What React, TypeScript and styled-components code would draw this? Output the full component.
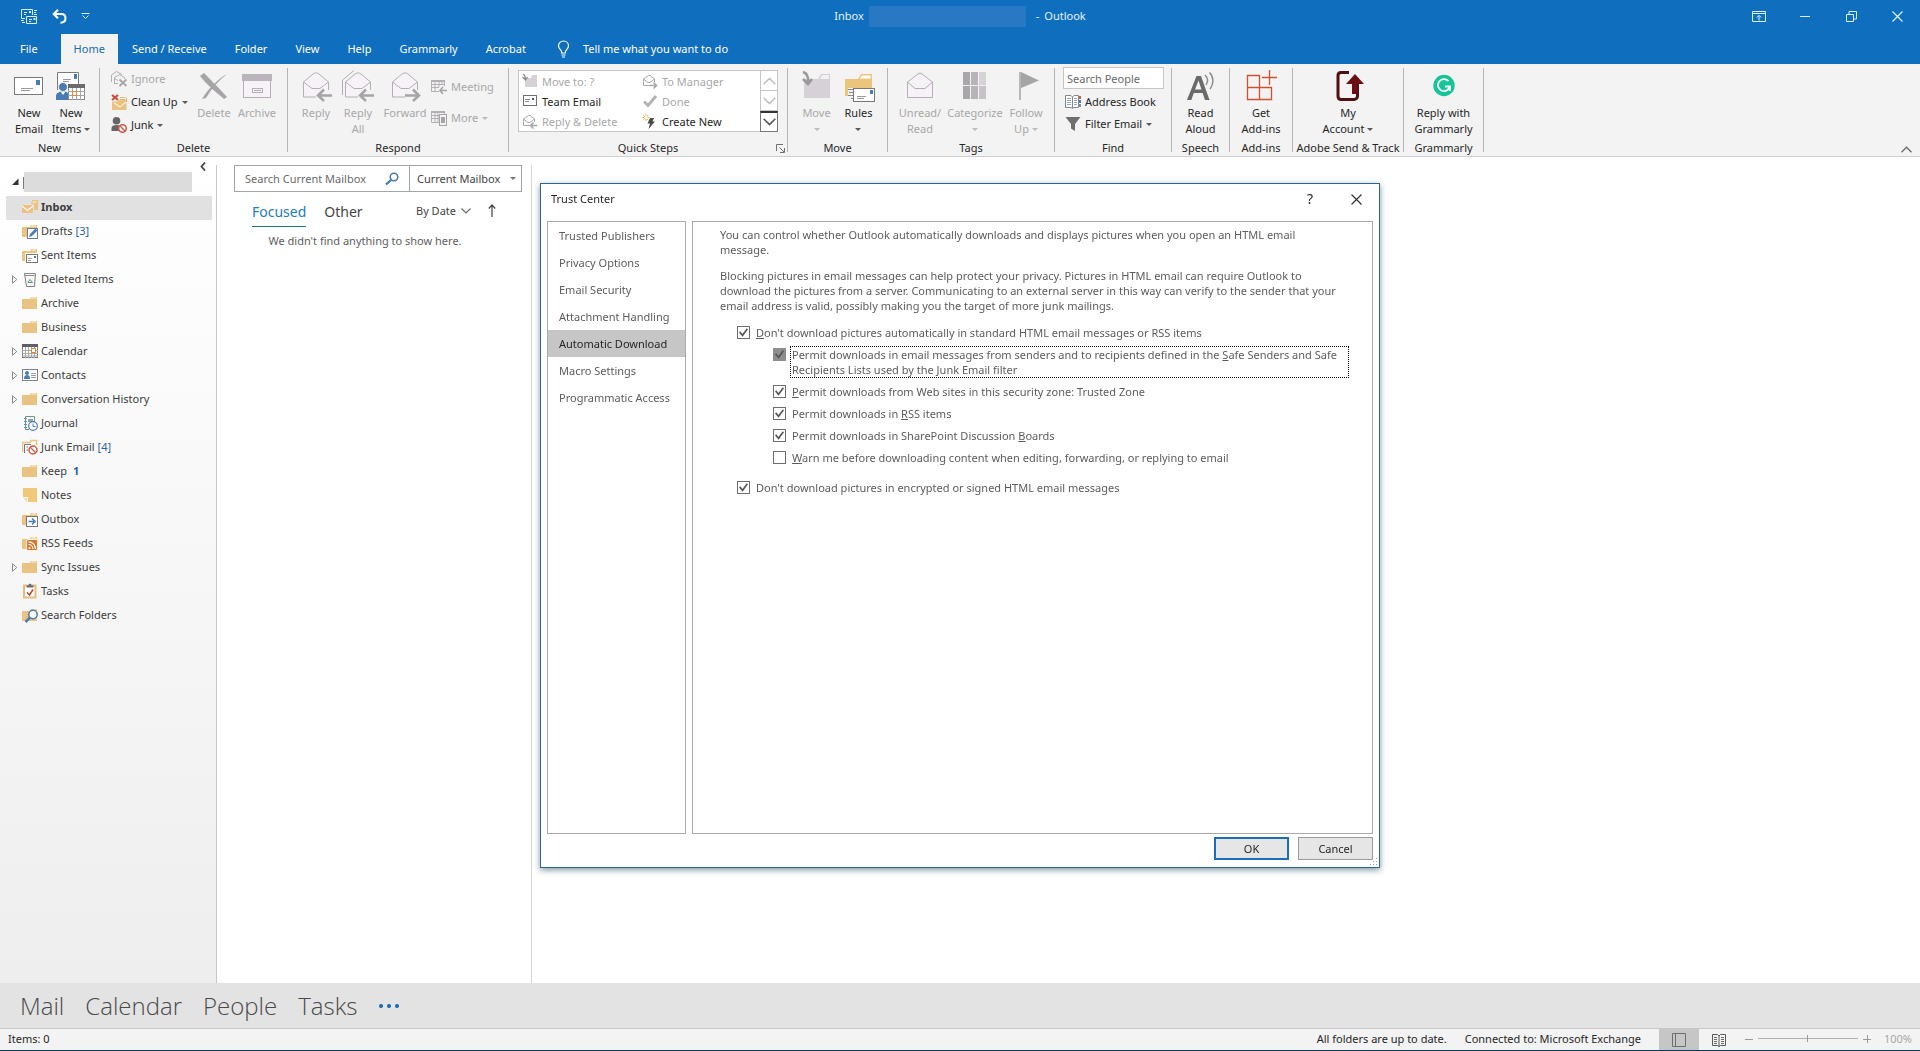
import React, { ReactNode } from "react";
import styled, { createGlobalStyle, css } from "styled-components";

const GlobalStyle = createGlobalStyle`
  *, *::before, *::after { box-sizing: border-box; }
  body { margin: 0; background: #fff; overflow: hidden; }
  body, button, input, select {
    font-family: "Noto Sans", "Open Sans", sans-serif;
    font-size: 11px;
    line-height: 16px;
    color: #262626;
  }
  button { border: 0; padding: 0; background: none; white-space: nowrap; }
  ul { list-style: none; margin: 0; padding: 0; }
  p, h1, h2 { margin: 0; font-size: 11px; font-weight: 400; }
  svg { display: block; flex: none; }
`;

const FADE = "#b3afb4";
const FADE_FILL = "#f6f2f7";
const TAN = "#eac282";
const BLUE = "#4a7cb4";
const GREY = "#6b6b6b";

/* ---------- icons ---------- */

type ArtProps = { w?: number; h?: number; children: ReactNode };
const Art = ({ w = 16, h = w, children }: ArtProps) => (
  <svg width={w} height={h} viewBox={`0 0 ${w} ${h}`} fill="none" aria-hidden="true">
    {children}
  </svg>
);

const SendReceiveIcon = () => (
  <Art w={17}>
    <g stroke="#d9f1ff" strokeWidth="1">
      <path d="M11.500 7V1.500H.5V10.500H4M5.500 8.500H15.500V15.500H5.500Z" />
      <path d="M3 4.500H6M3 6.500H5M8 11.500H11M8 13.500H10M13 2.500H16M13 4.500H15M13 6.500H16M0 12.500H3M1 14.500H4" />
    </g>
    <path d="M8 3H10V5H8ZM12.500 10H14.500V12H12.500Z" fill="#d9f1ff" />
  </Art>
);
const UndoIcon = () => (
  <Art w={15}>
    <path d="M2 5H9C12 5 13.500 7 13.500 9.200C13.500 11.500 12 13.500 8.500 13.800" stroke="#fff" strokeWidth="2" />
    <path d="M6 .8L1.800 5L6 9.200" stroke="#fff" strokeWidth="2.200" />
  </Art>
);
const QatMoreIcon = () => (
  <Art w={9} h={8}>
    <path d="M.5 1.500H8.500M1.500 3.500L4.500 6.500L7.500 3.500" stroke="#d9f1ff" />
  </Art>
);
const RibbonOptionsIcon = () => (
  <Art w={14} h={12}>
    <path d="M.5 1.500H13.500V11.500H.5ZM.5 3.500H13.500M7 10.500V5.500M4.800 7.500L7 5.300L9.200 7.500" stroke="#d9f1ff" />
  </Art>
);
const MinimizeIcon = () => (
  <Art w={10}><path d="M0 5.500H10" stroke="#d9f1ff" /></Art>
);
const RestoreIcon = () => (
  <Art w={11}><path d="M.5 3.500H7.500V10.500H.5ZM3 3.500V.5H10.500V8H8" stroke="#d9f1ff" /></Art>
);
const CloseIcon = ({ color = "#d9f1ff" }: { color?: string }) => (
  <Art w={11}><path d="M.5 .5L10.500 10.500M10.500 .5L.5 10.500" stroke={color} strokeWidth="1.200" /></Art>
);
const BulbIcon = () => (
  <Art w={13} h={18}>
    <path d="M4.500 13V11.500C4.500 9.800 1.500 9 1.500 5.800C1.500 3 3.700 1 6.500 1S11.500 3 11.500 5.800C11.500 9 8.500 9.800 8.500 11.500V13ZM4.500 15H8.500M5 17H8" stroke="#fff" strokeWidth="1.200" />
  </Art>
);

const Mail = ({ x, y, w, h }: { x: number; y: number; w: number; h: number }) => (
  <>
    <rect x={x + 0.5} y={y + 0.5} width={w - 1} height={h - 1} fill="#fff" stroke="#7a7a7a" />
    <rect x={x + w - 7} y={y + 3} width="4" height="5" fill={BLUE} />
    <path d={`M${x + 7} ${y + h - 6.5}H${x + w - 10}M${x + 7} ${y + h - 4.5}H${x + w - 13}`} stroke="#9a9a9a" />
  </>
);
const NewEmailIcon = () => (
  <Art w={32}><Mail x={1} y={7} w={29} h={18} /></Art>
);
const NewItemsIcon = () => (
  <Art w={32}>
    <path d="M2.500 20V2.500H23.500V15" fill="#fff" stroke="#7a7a7a" />
    <rect x="19" y="4" width="3" height="5" fill={BLUE} />
    <path d="M8 9.500H16M8 11.500H14" stroke="#9a9a9a" />
    <circle cx="8" cy="17" r="4.500" fill={BLUE} stroke="#f3f3f3" />
    <path d="M1 30V26C1 23 4 21.500 8 21.500S14.500 23 14.500 26V30Z" fill={BLUE} />
    <path d="M5.500 21.500L8 25L10.500 21.500Z" fill="#fff" />
    <rect x="13.500" y="15.500" width="16" height="14" fill="#fff" stroke="#8a8a8a" />
    <rect x="13" y="14" width="17" height="4" fill="#6b6b6b" />
    <path d="M17.500 18V30M21.500 18V30M25.500 18V30M13 21.500H30M13 25.500H30" stroke="#a5a5a5" />
    <rect x="17.500" y="21.500" width="4" height="4" stroke="#e08a3c" fill="#fff" />
  </Art>
);
const IgnoreIcon = () => (
  <Art w={16}>
    <path d="M.5 11V4L5.500 .5L11 3.500M3.500 13V6.500L8.500 3.500L13.500 6.500V8M3.500 12.500H7M3.500 7.500L7 9.500" stroke={FADE} />
    <path d="M8.500 8.500L15.500 15M15.500 8.500L8.500 15" stroke="#a8a4a8" strokeWidth="1.800" />
  </Art>
);
const CleanUpIcon = () => (
  <Art w={16}>
    <path d="M1 1L7 6M7 1L1 6" stroke="#cf4a33" strokeWidth="2" />
    <path d="M9 3.500H14.500M9 5.500H14.500M15.500 4V8" stroke="#e0b878" />
    <path d="M1 7.500H6V6H15.500V16H1Z" fill={TAN} />
    <path d="M3 9L9 13L15 8" stroke="#fff" />
  </Art>
);
const JunkIcon = () => (
  <Art w={16}>
    <circle cx="5.500" cy="3.800" r="3.800" fill="#666" />
    <path d="M.5 14V11C.5 9 2.500 8 5.500 8S9 9 9 10V14Z" fill="#666" />
    <circle cx="11.500" cy="11.500" r="3.800" fill="#f3f3f3" stroke="#cf5a48" strokeWidth="1.500" />
    <path d="M9 9L14 14" stroke="#cf5a48" strokeWidth="1.300" />
  </Art>
);
const DeleteIcon = () => (
  <Art w={32}>
    <path d="M2 6L6 3C11 8 20 17 29 27L26 29C19 23 8 14 2 6Z" fill="#a7a4a7" />
    <path d="M29 4C20 9 10 19 4 29L8 28C13 19 20 11 29 4Z" fill="#a7a4a7" />
  </Art>
);
const ArchiveIcon = () => (
  <Art w={32}>
    <rect x="2.500" y="9" width="27" height="18.500" fill={FADE_FILL} stroke={FADE} />
    <rect x="1" y="4" width="30" height="7" fill="#b9b5ba" />
    <rect x="11.500" y="18.500" width="10" height="4" stroke={FADE} />
    <path d="M13 20.500H20" stroke={FADE} />
  </Art>
);
const Envelope = () => (
  <>
    <path d="M3.500 27V12L15.500 3L28.500 12V27Z" fill={FADE_FILL} />
    <path d="M18 27H3.500V12L13 4C15.500 2.500 17 2.500 19 4L28.500 12V20M3.500 12L12 18.500H20L28.500 12" stroke={FADE} />
  </>
);
const ReplyIcon = () => (
  <Art w={32}>
    <Envelope />
    <path d="M16 21H31V31H16Z" fill="#f3f3f3" />
    <path d="M18 25.500H32M24 19.500L18 25.500L24 31" stroke="#a7a4a7" strokeWidth="2.500" />
  </Art>
);
const ReplyAllIcon = () => (
  <Art w={32}>
    <path d="M.5 25V10L12 .5" stroke={FADE} />
    <Envelope />
    <path d="M16 21H31V31H16Z" fill="#f3f3f3" />
    <path d="M18 25.500H32M24 19.500L18 25.500L24 31" stroke="#a7a4a7" strokeWidth="2.500" />
  </Art>
);
const ForwardIcon = () => (
  <Art w={32}>
    <Envelope />
    <path d="M16 21H31V31H16Z" fill="#f3f3f3" />
    <path d="M16 25.500H30M24 19.500L30 25.500L24 31" stroke="#a7a4a7" strokeWidth="2.500" />
  </Art>
);
const MeetingIcon = () => (
  <Art w={16}>
    <path d="M.5 1.500H13.500V7M.5 1.500V12.500H8M4 3V12M8 3V8M1 5.500H13M1 8.500H8M11 3V6" stroke={FADE} />
    <path d="M0 2H14" stroke={FADE} strokeWidth="2" />
    <path d="M9 11.500H16M12 8L9 11.500L12 15" stroke="#a7a4a7" strokeWidth="1.600" />
  </Art>
);
const MoreRespondIcon = () => (
  <Art w={16}>
    <path d="M.5 1.500H13.500V4M.5 1.500V12.500H8M4 3V12M1 5.500H8M1 8.500H8M7 3V12" stroke={FADE} />
    <path d="M0 2H14" stroke={FADE} strokeWidth="2" />
    <rect x="8.500" y="4.500" width="7" height="11" fill="#f3f3f3" stroke="#a7a4a7" />
    <rect x="10" y="7" width="4" height="6" fill="#a7a4a7" />
  </Art>
);
const MoveToIcon = () => (
  <Art w={16}>
    <path d="M3 4H9L10 1H15V13H3Z" fill="#d6d1d7" />
    <path d="M1 0C3 1 3.500 3 3.500 5M.5 3L3.500 6L5.500 3" stroke="#8c8a8c" strokeWidth="1.300" />
  </Art>
);
const TeamEmailIcon = () => (
  <Art w={16}>
    <rect x="1.500" y="1.500" width="13" height="10" fill="#fff" stroke="#6e6e6e" />
    <path d="M3 5.500H8M3 7.500H7" stroke="#8a8a8a" />
    <path d="M10 4H12V6H10Z" fill="#555" />
  </Art>
);
const SmallReplyIcon = ({ forward }: { forward?: boolean }) => (
  <Art w={16}>
    <path d="M8 11.500H1.500V5L6.500 1.500H8L12.500 5V8M1.500 5L6 8.500H8L12.500 5" stroke="#aaa6ab" />
    <path d={forward ? "M8 11.500H14.500M11.500 8.500L14.500 11.500L11.500 14.500" : "M8.500 11.500H15.500M11.500 8.500L8.500 11.500L11.500 14.500"} stroke="#a7a4a7" strokeWidth="1.500" />
  </Art>
);
const DoneIcon = () => (
  <Art w={16}><path d="M2 7.500L6 11.500L14 2" stroke="#b3b1b3" strokeWidth="2.800" /></Art>
);
const CreateNewIcon = () => (
  <Art w={16}>
    <path d="M4 0V7M0 3.500H7.500M1.200 1.200L6.300 6.200M6.300 1.200L1.200 6.200" stroke="#e3b65f" />
    <circle cx="4" cy="3.500" r="1.500" fill="#fff" />
    <path d="M8 4H12L10.500 7.500H13L6.500 15L8 9.500H5.500Z" fill="#4a4a4a" />
  </Art>
);
const LauncherIcon = () => (
  <Art w={9}>
    <path d="M.5 7V.5H7M3.500 3.500L8 8M8.500 4V8.500H4" stroke="#6e6e6e" />
  </Art>
);
const MoveIcon = () => (
  <Art w={32}>
    <path d="M3 9H17L20 4H29V28H3Z" fill="#d6d1d7" />
    <path d="M19 9L21 5H28V9Z" fill="#f3f0f4" />
    <path d="M2 2C6 3 7.500 6 7 12M2 9L7 14L11 9" stroke="#9a989a" strokeWidth="2.600" />
  </Art>
);
const RulesIcon = () => (
  <Art w={32}>
    <path d="M2 9H15L18 4H29V26H2Z" fill="#ecc57c" />
    <path d="M17 8.500L19 5.500H27.500V8.500Z" fill="#fff" />
    <path d="M5 18H11V30H5Z" fill="#f3f3f3" />
    <path d="M5 19.500H10M6 22.500H10M5 25.500H10M8 28.500H10" stroke="#8a8a8a" />
    <rect x="10.500" y="18.500" width="21" height="13" fill="#fff" stroke="#777" />
    <rect x="27" y="20" width="3" height="4" fill={BLUE} />
    <path d="M14 26.500H23M14 28.500H21" stroke="#9a9a9a" />
  </Art>
);
const UnreadIcon = () => (
  <Art w={32}>
    <path d="M3.500 27.500V12L14 4C15.500 3 16.500 3 18 4L28.500 12V27.500ZM3.500 12L11 18.500H21L28.500 12" fill={FADE_FILL} stroke={FADE} />
  </Art>
);
const CategorizeIcon = () => (
  <Art w={32}>
    <path d="M4 2H11V15H4ZM4 16H11V29H4Z" fill="#aaa7ab" />
    <path d="M12 2H19V15H12ZM12 16H19V29H12Z" fill="#b7b3b8" />
    <path d="M20 2H27V15H20Z" fill="#d6d2d7" />
    <path d="M20 16H27V29H20Z" fill="#c6c2c7" />
  </Art>
);
const FlagIcon = () => (
  <Art w={32}>
    <path d="M9 2H11V30H9Z" fill="#b9b5ba" />
    <path d="M11 2L29 10.500L11 18Z" fill="#a7a4a7" />
  </Art>
);
const AddressBookIcon = () => (
  <Art w={16}>
    <path d="M.5 1.500H6L7.500 3L9 1.500H13.500V13.500H9L7.500 14.500L6 13.500H.5ZM7.500 3V14" fill="#fff" stroke="#7d8a96" />
    <path d="M2 4.500H6M2 6.500H6M2 8.500H6M2 10.500H6M9 4.500H12M9 6.500H12M9 8.500H12M9 10.500H12" stroke="#9aa4ad" />
    <path d="M14 2H16V5H14Z" fill="#cf5a48" /><path d="M14 6H16V9H14Z" fill={BLUE} /><path d="M14 10H16V13H14Z" fill="#8a8a8a" />
  </Art>
);
const FilterIcon = () => (
  <Art w={16}><path d="M.5 1H15.500L10 8V15L6 12.500V8Z" fill="#6e6e6e" /></Art>
);
const ReadAloudIcon = () => (
  <Art w={32}>
    <path d="M2 30L11.500 6H16L24.500 30H20L17.600 23H8.800L6.300 30ZM10 19.500H16.500L13.500 10.500Z" fill="#6a6a6a" fillRule="evenodd" />
    <path d="M20 5C23 8 23 12 21 15M24.500 2.500C29 7 29 14 25 19" stroke="#8a8a8a" strokeWidth="1.400" />
  </Art>
);
const AddInsIcon = () => (
  <Art w={32}>
    <path d="M2.500 5.500H14.500V29.500H2.500ZM2.500 17.500H26.500V29.500H14.500M24.500 0V15M17 7.500H32" stroke="#cf5232" strokeWidth="1.300" />
  </Art>
);
const AccountIcon = () => (
  <Art w={32}>
    <path d="M17 2.500H9C7 2.500 6 3.500 6 5.500V26C6 28 7 29.500 9 29.500H22C24 29.500 25.500 28 25.500 26V12" stroke="#4d1013" strokeWidth="3" />
    <path d="M23 4L32 14H14Z" fill="#6b0f14" />
    <path d="M20 12H26V24H20Z" fill="#6b0f14" />
  </Art>
);
const GrammarlyIcon = () => (
  <Art w={32}>
    <circle cx="16" cy="15.500" r="10.700" fill="#17c497" />
    <path d="M20.500 11.200A6 6 0 1 0 21.800 16.500H17M22 16V21" stroke="#fff" strokeWidth="1.800" />
  </Art>
);

/* folder icons */
const FolderShape = () => (
  <>
    <path d="M0 4H8L9 2H15V14H0Z" fill={TAN} />
    <path d="M9 3.500L9.800 2.500H14V3.500Z" fill="#fff8ea" />
  </>
);
const FolderIcon = () => <Art><FolderShape /></Art>;
const InboxIcon = () => (
  <Art>
    <path d="M4 5H9L10 1H16V11H4Z" fill={TAN} />
    <path d="M10.500 2.500H14.500V3.500H10.500Z" fill="#fff" />
    <rect x="-.5" y="5.500" width="12" height="9" fill="#ecc080" stroke="#e2e2e2" />
    <path d="M0 7L5.500 11.500L11 7" stroke="#fff" strokeWidth="1.200" />
  </Art>
);
const DraftsIcon = () => (
  <Art>
    <FolderShape />
    <rect x="5.500" y="5.500" width="10" height="10" fill="#fff" stroke="#6d7f96" />
    <path d="M7 14L8 11L13.500 5.500L15.500 7.500L10 13Z" fill={BLUE} />
  </Art>
);
const SentIcon = () => (
  <Art>
    <FolderShape />
    <path d="M3 6H16V16H3Z" fill="#fff" />
    <rect x="4.500" y="7.500" width="11" height="8" fill="#fff" stroke="#777" />
    <path d="M6 11.500H10M6 13.500H9" stroke="#999" /><path d="M12 9H14V11H12Z" fill="#5a7690" />
  </Art>
);
const TrashIcon = () => (
  <Art>
    <path d="M2.500 2.500H13.500L12.500 15.500H4.500Z" fill="#f7f7f7" stroke="#7d7d7d" />
    <path d="M2 2.500H13M3 4.500H12.500" stroke="#8d8d8d" />
    <path d="M6 11.500L8 8.500L10.500 11.500Z" stroke="#5f8f8a" />
  </Art>
);
const CalendarIcon = () => (
  <Art>
    <rect x=".5" y="2.500" width="15" height="12" fill="#fff" stroke="#7a7a7a" />
    <path d="M0 1H16V4H0Z" fill="#5f5f68" />
    <path d="M3.500 4V15M6.500 4V15M9.500 4V15M12.500 4V15M0 7.500H16M0 10.500H16M0 13H16" stroke="#aaa" />
    <rect x="9.500" y="5.500" width="4" height="4" fill="#fff" stroke="#dd8a3a" />
  </Art>
);
const ContactsIcon = () => (
  <Art>
    <rect x=".5" y="2.500" width="15" height="11" fill="#fff" stroke="#7a8490" />
    <circle cx="5" cy="6" r="2" fill={BLUE} /><path d="M2 12C2 9 3 8 5 8S8 9 8 12Z" fill={BLUE} />
    <path d="M9 6.500H14M9 8.500H14M9 10.500H14" stroke="#999" />
  </Art>
);
const JournalIcon = () => (
  <Art>
    <path d="M3.500 1.500H12.500V7M3.500 1.500V14.500H7" stroke="#6c9494" />
    <path d="M2 3.500H5M2 6.500H5M2 9.500H5M2 12.500H5" stroke="#6c9494" />
    <path d="M6 4H11V7H6Z" fill="#8aa9a9" />
    <circle cx="11" cy="11" r="4.300" fill="#fff" stroke={BLUE} strokeWidth="1.200" />
    <path d="M11 8.500V11.500H13.500" stroke={BLUE} />
  </Art>
);
const JunkFolderIcon = () => (
  <Art>
    <path d="M.5 13V3.500H8L9 1.500H14.500V6" stroke={TAN} strokeWidth="1.500" />
    <path d="M2.500 14V5.500H9M4.500 8H6M4.500 11H6" stroke="#777" />
    <circle cx="11" cy="11" r="4" fill="#fff" stroke="#cf5a48" strokeWidth="1.500" />
    <path d="M8.300 8.300L13.700 13.700" stroke="#cf5a48" strokeWidth="1.300" />
  </Art>
);
const NotesIcon = () => (
  <Art>
    <path d="M1 1H15V15H6V10H1Z" fill="#efc878" /><path d="M1 11H5V15Z" fill="#f6dcaa" />
  </Art>
);
const OutboxIcon = () => (
  <Art>
    <FolderShape />
    <rect x="4.500" y="5.500" width="11" height="10" fill="#fff" stroke="#777" />
    <path d="M6.500 10.500H13M10 7.500L13 10.500L10 13.500" stroke={BLUE} strokeWidth="1.600" />
  </Art>
);
const RssIcon = () => (
  <Art>
    <FolderShape />
    <rect x="4.500" y="4.500" width="11" height="11" rx="1.500" fill="#d9772e" stroke="#fff3e6" />
    <circle cx="7.500" cy="13" r="1.100" fill="#fff" />
    <path d="M6.500 9.500C9 9.500 11 11.500 11 14M6.500 6.800C10.500 6.800 13.500 10 13.500 14" stroke="#fff" strokeWidth="1.200" />
  </Art>
);
const TasksIcon = () => (
  <Art>
    <path d="M2 2.500H13.500V14.500H2Z" fill="#fff" stroke="#e2bd80" strokeWidth="2" />
    <path d="M4.500 4.500V2.500H6.500C6.500 0 9.500 0 9.500 2.500H11.500V4.500Z" fill="#6b6b74" />
    <path d="M5 9.500L7.500 12L11 6.500" stroke="#b8493a" strokeWidth="1.600" />
  </Art>
);
const SearchFolderIcon = () => (
  <Art>
    <FolderShape />
    <circle cx="11" cy="7.500" r="4.200" fill="#fff" stroke={BLUE} strokeWidth="1.500" />
    <path d="M8 10.500L3.500 15" stroke={BLUE} strokeWidth="2.500" />
  </Art>
);
const MagnifierIcon = () => (
  <Art w={14}>
    <circle cx="9" cy="5" r="3.800" stroke="#4378a8" strokeWidth="1.500" />
    <path d="M6.300 7.700L1 12.500" stroke="#4378a8" strokeWidth="2.200" />
  </Art>
);
const Chevron = ({ up, size = 10, color = GREY }: { up?: boolean; size?: number; color?: string }) => (
  <svg width={size} height={Math.round(size * 0.6)} viewBox="0 0 10 6" fill="none" aria-hidden="true">
    <path d={up ? "M.5 5.500L5 1L9.500 5.500" : "M.5 .5L5 5L9.500 .5"} stroke={color} strokeWidth="1.200" />
  </svg>
);
const ArrowUpIcon = () => (
  <Art w={8} h={13}><path d="M4 13V1M.8 4.500L4 1L7.200 4.500" stroke="#444" strokeWidth="1.200" /></Art>
);
const NormalViewIcon = () => (
  <Art w={14}><path d="M.5 .5H13.500V13.500H.5ZM3.500 .5V13.500" stroke="#6e6e6e" /></Art>
);
const ReadingViewIcon = () => (
  <Art w={14}>
    <path d="M7 2V14M.5 1.500H5.500L7 3L8.500 1.500H13.500V12.500H8.500L7 13.500L5.500 12.500H.5Z" stroke="#5a5a5a" />
    <path d="M2 4.500H5M2 6.500H5M2 8.500H5M2 10.500H5M9 4.500H12M9 6.500H12M9 8.500H12M9 10.500H12" stroke="#6a6a6a" />
  </Art>
);

/* ---------- window frame ---------- */

const Window = styled.div`
  display: flex;
  flex-direction: column;
  height: 100vh;
  border-bottom: 1px solid #0b3a63;
`;
const TitleBar = styled.header`
  display: grid;
  grid-template-columns: 1fr auto 1fr;
  align-items: center;
  height: 34px;
  flex: none;
  padding-bottom: 2px;
  background: #106ebe;
  color: #e2f3ff;
`;
const QuickAccess = styled.div`
  display: flex;
  align-items: center;
  gap: 14px;
  padding-left: 21px;
`;
const WindowTitle = styled.h1`
  display: flex;
  align-items: center;
  gap: 5px;
  color: #e2f3ff;
`;
const Redaction = styled.span<{ $w: number }>`
  width: ${(p) => p.$w}px;
  height: 21px;
  margin-right: 5px;
  background: #2878c3;
`;
const Captions = styled.div`
  display: flex;
  justify-self: end;
`;
const CaptionButton = styled.button`
  display: grid;
  place-items: center;
  width: 46px;
  height: 30px;
`;
const TabBar = styled.nav`
  display: flex;
  align-items: stretch;
  height: 30px;
  flex: none;
  background: #106ebe;
`;
const Tab = styled.button<{ $active?: boolean; $file?: boolean }>`
  padding: 0 ${(p) => (p.$file ? "23px 0 20px" : p.$active ? "13px" : "14px")};
  color: #fff;
  ${(p) => p.$active && css`background: #f3f3f3; color: #1a6bb0;`}
`;
const TellMe = styled.button`
  display: flex;
  align-items: center;
  gap: 13px;
  padding-left: 17px;
  color: #fff;
`;

/* ---------- ribbon ---------- */

const Ribbon = styled.section`
  display: flex;
  flex: none;
  height: 93px;
  background: #f3f3f3;
  border-bottom: 1px solid #cfcfcf;
`;
const GroupBox = styled.div<{ $w: number; $top: number }>`
  display: flex;
  flex-direction: column;
  width: ${(p) => p.$w}px;
  padding-top: ${(p) => p.$top}px;
`;
const GroupBody = styled.div<{ $start?: number }>`
  display: flex;
  flex: 1;
  min-height: 0;
  ${(p) => (p.$start === undefined ? "justify-content: center;" : `padding-left: ${p.$start}px;`)}
`;
const GroupLabel = styled.div`
  display: grid;
  grid-template-columns: 1fr auto 1fr;
  align-items: center;
  height: 16px;
  flex: none;
  white-space: nowrap;
  & > span { grid-column: 2; }
`;
const Launcher = styled.button`
  justify-self: end;
  padding-right: 2px;
`;
const Divider = styled.div`
  width: 1px;
  height: 84px;
  margin-top: 4px;
  background: #b5b5b5;
`;
const Big = styled.button<{ $w: number }>`
  display: flex;
  flex-direction: column;
  align-items: center;
  justify-content: flex-start;
  width: ${(p) => p.$w}px;
  &:disabled { color: #a9a7a9; }
`;
const BigText = styled.span`
  display: flex;
  flex-direction: column;
  align-items: center;
  padding-top: 3px;
`;
const BigLine = styled.span`
  display: flex;
  align-items: center;
  height: 16px;
`;
const Caret = styled.i<{ $gap?: number }>`
  border: 3px solid transparent;
  border-top-color: currentColor;
  border-bottom: 0;
  margin-left: ${(p) => p.$gap ?? 3}px;
  opacity: 0.75;
`;
const SmallColumn = styled.div<{ $w: number; $gap: number; $top?: number }>`
  display: flex;
  flex-direction: column;
  gap: ${(p) => p.$gap}px;
  width: ${(p) => p.$w}px;
  padding-top: ${(p) => p.$top ?? 0}px;
`;
const Small = styled.button<{ $inset?: boolean }>`
  display: flex;
  align-items: center;
  gap: 4px;
  height: 18px;
  padding-left: ${(p) => (p.$inset ? 2 : 0)}px;
  &:disabled { color: #a9a7a9; }
`;
const Gallery = styled.div`
  display: flex;
  width: 260px;
  height: 62px;
  background: #fff;
  border: 1px solid #c6c6c6;
`;
const GalleryGrid = styled.div`
  display: grid;
  grid-template-columns: 120px 1fr;
  grid-auto-rows: 20px;
  align-items: end;
  flex: 1;
  padding-left: 3px;
`;
const GalleryScroll = styled.div`
  display: grid;
  grid-template-rows: repeat(3, 1fr);
  width: 17px;
  border-left: 1px solid #c6c6c6;
`;
const ScrollButton = styled.button<{ $more?: boolean }>`
  display: grid;
  place-items: center;
  border-bottom: 1px solid #c6c6c6;
  ${(p) => p.$more && css`border: 1px solid #777; border-top: 2px solid #333; margin: 0 -1px -1px;`}
`;
const PeopleSearch = styled.input`
  width: 101px;
  height: 22px;
  padding: 0 3px;
  border: 1px solid #c6c6c6;
  background: #fff;
  &::placeholder { color: #6a6a6a; opacity: 1; }
`;
const CollapseRibbon = styled.button`
  align-self: flex-end;
  margin-left: auto;
  padding: 0 8px 3px;
`;

type BigProps = { w: number; icon: ReactNode; lines: string[]; caret?: boolean; caretBelow?: boolean; disabled?: boolean };
const BigButton = ({ w, icon, lines, caret, caretBelow, disabled }: BigProps) => (
  <Big $w={w} disabled={disabled}>
    {icon}
    <BigText>
      {lines.map((line, i) => (
        <BigLine key={line}>
          {line}
          {caret && i === lines.length - 1 && <Caret />}
        </BigLine>
      ))}
      {caretBelow && <BigLine><Caret $gap={0} /></BigLine>}
    </BigText>
  </Big>
);

type SmallProps = { icon: ReactNode; label: string; caret?: boolean; disabled?: boolean; inset?: boolean };
const SmallButton = ({ icon, label, caret, disabled, inset }: SmallProps) => (
  <Small disabled={disabled} $inset={inset}>
    {icon}
    {label}
    {caret && <Caret $gap={0} />}
  </Small>
);

type GroupProps = { w: number; label: string; start?: number; top?: number; launcher?: boolean; children: ReactNode };
const Group = ({ w, label, start, top = 6, launcher, children }: GroupProps) => (
  <>
    <GroupBox $w={w} $top={top}>
      <GroupBody $start={start}>{children}</GroupBody>
      <GroupLabel>
        <span>{label}</span>
        {launcher && <Launcher aria-label="Manage quick steps"><LauncherIcon /></Launcher>}
      </GroupLabel>
    </GroupBox>
    <Divider />
  </>
);

/* ---------- main area ---------- */

const Main = styled.main`
  display: flex;
  flex: 1;
  min-height: 0;
`;
const Sidebar = styled.aside`
  width: 216px;
  flex: none;
  padding: 3px 4px 0 6px;
  background: linear-gradient(#fff, #f7f7f7 50%, #eeeeee);
`;
const VerticalRule = styled.div<{ $color: string }>`
  width: 1px;
  margin-top: 8px;
  background: ${(p) => p.$color};
`;
const CollapsePane = styled.button`
  display: block;
  height: 12px;
  margin: 0 6px 0 auto;
`;
const AccountRow = styled.div`
  display: flex;
  align-items: flex-start;
  gap: 4px;
  height: 24px;
  padding-left: 6px;
`;
const AccountMark = styled.span`
  width: 1px;
  height: 12px;
  margin: 5px 0 0 -1px;
  background: #777;
`;
const AccountName = styled.span`
  width: 168px;
  height: 20px;
  margin-left: -4px;
  background: #dcdcdc;
`;
const FolderRow = styled.li<{ $selected?: boolean }>`
  display: grid;
  grid-template-columns: 16px 16px auto 1fr;
  align-items: center;
  height: 24px;
  padding-bottom: 2px;
  color: #3c3c3c;
  background: ${(p) => (p.$selected ? "#e1e1e1" : "transparent")};
  font-weight: ${(p) => (p.$selected ? 700 : 400)};
`;
const FolderName = styled.span`
  padding-left: 3px;
`;
const Count = styled.span<{ $bold?: boolean }>`
  padding-left: ${(p) => (p.$bold ? 6 : 3)}px;
  font-weight: ${(p) => (p.$bold ? 700 : 400)};
  color: #2a63a5;
`;
const Expander = styled.span`
  padding-left: 6px;
`;

const MessageList = styled.section`
  width: 314px;
  flex: none;
  padding: 8px 9px 0 17px;
`;
const SearchRow = styled.div`
  display: grid;
  grid-template-columns: 1fr 24px 112px;
  align-items: center;
  height: 27px;
  border: 1px solid #a0a5aa;
`;
const MailSearch = styled.input`
  width: 100%;
  border: 0;
  padding: 0 0 0 10px;
  outline: 0;
  &::placeholder { color: #6a6a6a; opacity: 1; }
`;
const ScopeBox = styled.label`
  display: flex;
  align-items: center;
  height: 100%;
  border-left: 1px solid #a0a5aa;
  padding-right: 5px;
  color: #444;
`;
const Scope = styled.select`
  flex: 1;
  appearance: none;
  border: 0;
  background: none;
  padding: 0 0 0 7px;
  color: #444;
`;
const ListTabs = styled.div`
  display: flex;
  align-items: center;
  height: 35px;
  padding: 2px 26px 0 18px;
`;
const Pivot = styled.button<{ $active?: boolean }>`
  height: 33px;
  margin-right: 18px;
  padding-top: 3px;
  font-size: 14px;
  color: ${(p) => (p.$active ? "#1f7cbf" : "#444")};
  border-bottom: 1px solid ${(p) => (p.$active ? "#12807c" : "transparent")};
`;
const SortButton = styled.button<{ $push?: boolean }>`
  display: flex;
  align-items: center;
  gap: 5px;
  margin-left: ${(p) => (p.$push ? "auto" : "17px")};
  color: #444;
`;
const EmptyNote = styled.p`
  padding: 6px 26px 0 0;
  text-align: center;
  color: #5e5e5e;
`;

/* ---------- bottom bars ---------- */

const ModuleBar = styled.nav`
  display: flex;
  align-items: center;
  gap: 21px;
  height: 45px;
  flex: none;
  padding-left: 20px;
  background: #e3e3e3;
`;
const Module = styled.button`
  font-family: "Open Sans", "Noto Sans", sans-serif;
  font-size: 24px;
  line-height: 32px;
  font-weight: 300;
  color: #4a4a4a;
`;
const StatusBar = styled.footer`
  display: flex;
  align-items: center;
  height: 22px;
  flex: none;
  padding: 0 8px;
  background: #f3f3f3;
  border-top: 1px solid #c8c8c8;
`;
const StatusText = styled.span`
  padding-bottom: 2px;
`;
const StatusRight = styled.div`
  display: flex;
  align-items: center;
  gap: 18px;
  height: 100%;
  margin-left: auto;
`;
const ViewButtons = styled.div`
  display: flex;
  height: 100%;
`;
const ViewButton = styled.button<{ $active?: boolean }>`
  display: grid;
  place-items: center;
  width: 40px;
  background: ${(p) => (p.$active ? "#c6c6c6" : "transparent")};
`;
const ZoomBox = styled.div`
  display: flex;
  align-items: center;
  gap: 5px;
  margin-left: -12px;
  padding-bottom: 2px;
  color: #a9a9a9;
`;
const ZoomStep = styled.button`
  display: grid;
  width: 8px;
`;
const ZoomRange = styled.input`
  appearance: none;
  width: 100px;
  height: 9px;
  margin: 0;
  background: linear-gradient(#b0b0b0, #b0b0b0) center / 100% 1px no-repeat;
  &::-webkit-slider-thumb { appearance: none; width: 1px; height: 7px; background: #9a9a9a; }
`;
const ZoomValue = styled.span`
  padding-left: 8px;
`;

/* ---------- dialog ---------- */

const Overlay = styled.div`
  position: fixed;
  inset: 0;
  display: grid;
  place-items: center;
`;
const Dialog = styled.section`
  display: grid;
  grid-template-columns: 139px 1fr;
  grid-template-rows: 37px 1fr 33px;
  column-gap: 6px;
  width: 840px;
  height: 685px;
  padding: 0 6px;
  background: #fff;
  border: 1px solid #2d6592;
  box-shadow: 0 2px 6px rgba(20, 60, 80, 0.55);
`;
const DialogHeader = styled.header`
  grid-column: 1 / -1;
  display: flex;
  align-items: center;
  margin-right: -6px;
  padding: 0 0 7px 4px;
`;
const DialogTitle = styled.h2`
  margin-right: auto;
`;
const DialogControl = styled.button`
  display: grid;
  place-items: center;
  width: 46px;
  height: 30px;
  font-size: 14px;
`;
const Categories = styled.ul`
  border: 1px solid #aaa;
`;
const Category = styled.button<{ $active?: boolean }>`
  width: 100%;
  height: 27px;
  padding-left: 11px;
  text-align: left;
  color: ${(p) => (p.$active ? "#262626" : "#5c5c5c")};
  background: ${(p) => (p.$active ? "#c6c6c6" : "transparent")};
`;
const Panel = styled.div`
  border: 1px solid #aaa;
  padding: 5px 23px 0 27px;
  line-height: 15px;
  color: #5c5c5c;
`;
const Paragraph = styled.p`
  line-height: 15px;
  margin-bottom: 11px;
  padding-right: 8px;
`;
const Options = styled.div`
  display: flex;
  flex-direction: column;
  gap: 5px;
  padding-left: 17px;
`;
const Option = styled.label<{ $nested?: boolean; $last?: boolean }>`
  display: grid;
  grid-template-columns: 17px 1fr;
  margin-left: ${(p) => (p.$nested ? 36 : 0)}px;
  padding-top: ${(p) => (p.$last ? 8 : 0)}px;
`;
const OptionText = styled.span<{ $focused?: boolean }>`
  padding: 1px 2px;
  ${(p) => p.$focused && css`outline: 1px dotted #000; outline-offset: -1px;`}
`;
const Tick = styled.input`
  appearance: none;
  display: grid;
  place-items: center;
  width: 13px;
  height: 13px;
  margin: 2px 0 0;
  border: 1px solid #6e6e6e;
  background: #fff;
  &[data-focused="true"] { background: #8e8e8e; border-color: #8e8e8e; }
  &:checked::after {
    content: "";
    width: 9px;
    height: 9px;
    background: #555;
    clip-path: polygon(0 50%, 14% 36%, 38% 66%, 86% 4%, 100% 14%, 40% 96%);
  }
`;
const DialogFooter = styled.footer`
  grid-column: 1 / -1;
  display: flex;
  justify-content: flex-end;
  gap: 9px;
  padding-top: 3px;
`;
const DialogButton = styled.button<{ $primary?: boolean }>`
  width: 75px;
  height: 23px;
  background: #e6e6e6;
  border: ${(p) => (p.$primary ? "2px solid #1a6fb8" : "1px solid #9c9c9c")};
`;
const Grip = styled.div`
  align-self: flex-end;
  width: 9px;
  height: 9px;
  margin: 0 -5px 1px -13px;
  background: radial-gradient(circle, #9c9c9c 1px, transparent 1px) 0 0 / 3px 3px;
  clip-path: polygon(100% 0, 100% 100%, 0 100%, 0 67%, 33% 67%, 33% 33%, 67% 33%, 67% 0);
`;

const folders: { name: string; icon: ReactNode; count?: string; bold?: boolean; open?: boolean; selected?: boolean }[] = [
  { name: "Inbox", icon: <InboxIcon />, selected: true },
  { name: "Drafts", icon: <DraftsIcon />, count: "[3]" },
  { name: "Sent Items", icon: <SentIcon /> },
  { name: "Deleted Items", icon: <TrashIcon />, open: true },
  { name: "Archive", icon: <FolderIcon /> },
  { name: "Business", icon: <FolderIcon /> },
  { name: "Calendar", icon: <CalendarIcon />, open: true },
  { name: "Contacts", icon: <ContactsIcon />, open: true },
  { name: "Conversation History", icon: <FolderIcon />, open: true },
  { name: "Journal", icon: <JournalIcon /> },
  { name: "Junk Email", icon: <JunkFolderIcon />, count: "[4]" },
  { name: "Keep", icon: <FolderIcon />, count: "1", bold: true },
  { name: "Notes", icon: <NotesIcon /> },
  { name: "Outbox", icon: <OutboxIcon /> },
  { name: "RSS Feeds", icon: <RssIcon /> },
  { name: "Sync Issues", icon: <FolderIcon />, open: true },
  { name: "Tasks", icon: <TasksIcon /> },
  { name: "Search Folders", icon: <SearchFolderIcon /> },
];

const categories = [
  "Trusted Publishers",
  "Privacy Options",
  "Email Security",
  "Attachment Handling",
  "Automatic Download",
  "Macro Settings",
  "Programmatic Access",
];

const options: { id: string; text: ReactNode; checked: boolean; nested?: boolean; focused?: boolean; last?: boolean }[] = [
  { id: "html", text: <><u>D</u>on't download pictures automatically in standard HTML email messages or RSS items</>, checked: true },
  { id: "safe", text: <>Permit downloads in email messages from senders and to recipients defined in the <u>S</u>afe Senders and Safe Recipients Lists used by the Junk Email filter</>, checked: true, nested: true, focused: true },
  { id: "zone", text: <><u>P</u>ermit downloads from Web sites in this security zone: Trusted Zone</>, checked: true, nested: true },
  { id: "rss", text: <>Permit downloads in <u>R</u>SS items</>, checked: true, nested: true },
  { id: "boards", text: <>Permit downloads in SharePoint Discussion <u>B</u>oards</>, checked: true, nested: true },
  { id: "warn", text: <><u>W</u>arn me before downloading content when editing, forwarding, or replying to email</>, checked: false, nested: true },
  { id: "signed", text: <>Don't download pictures in encrypted or signed HTML email messages</>, checked: true, last: true },
];

const RibbonGroups = () => (
  <Ribbon>
    <Group w={99} label="New" start={8}>
      <BigButton w={42} icon={<NewEmailIcon />} lines={["New", "Email"]} />
      <BigButton w={42} icon={<NewItemsIcon />} lines={["New", "Items"]} caret />
    </Group>
    <Group w={187} label="Delete" start={11}>
      <SmallColumn $w={82} $gap={5}>
        <SmallButton icon={<IgnoreIcon />} label="Ignore" disabled />
        <SmallButton icon={<CleanUpIcon />} label="Clean Up" caret />
        <SmallButton icon={<JunkIcon />} label="Junk" caret />
      </SmallColumn>
      <BigButton w={42} icon={<DeleteIcon />} lines={["Delete"]} disabled />
      <BigButton w={44} icon={<ArchiveIcon />} lines={["Archive"]} disabled />
    </Group>
    <Group w={220} label="Respond" start={7}>
      <BigButton w={42} icon={<ReplyIcon />} lines={["Reply"]} disabled />
      <BigButton w={42} icon={<ReplyAllIcon />} lines={["Reply", "All"]} disabled />
      <BigButton w={52} icon={<ForwardIcon />} lines={["Forward"]} disabled />
      <SmallColumn $w={70} $gap={13} $top={8}>
        <SmallButton icon={<MeetingIcon />} label="Meeting" disabled />
        <SmallButton icon={<MoreRespondIcon />} label="More" caret disabled />
      </SmallColumn>
    </Group>
    <Group w={278} label="Quick Steps" launcher start={9}>
      <Gallery>
        <GalleryGrid>
          <SmallButton icon={<MoveToIcon />} label="Move to: ?" disabled />
          <SmallButton icon={<SmallReplyIcon forward />} label="To Manager" disabled />
          <SmallButton icon={<TeamEmailIcon />} label="Team Email" />
          <SmallButton icon={<DoneIcon />} label="Done" disabled />
          <SmallButton icon={<SmallReplyIcon />} label="Reply & Delete" disabled />
          <SmallButton icon={<CreateNewIcon />} label="Create New" />
        </GalleryGrid>
        <GalleryScroll>
          <ScrollButton aria-label="Previous row"><Chevron up size={13} color="#c0c0c0" /></ScrollButton>
          <ScrollButton aria-label="Next row"><Chevron size={13} color="#c0c0c0" /></ScrollButton>
          <ScrollButton aria-label="More steps" $more><Chevron size={13} color="#555" /></ScrollButton>
        </GalleryScroll>
      </Gallery>
    </Group>
    <Group w={99} label="Move">
      <BigButton w={42} icon={<MoveIcon />} lines={["Move"]} caretBelow disabled />
      <BigButton w={42} icon={<RulesIcon />} lines={["Rules"]} caretBelow />
    </Group>
    <Group w={166} label="Tags">
      <BigButton w={50} icon={<UnreadIcon />} lines={["Unread/", "Read"]} disabled />
      <BigButton w={60} icon={<CategorizeIcon />} lines={["Categorize"]} caretBelow disabled />
      <BigButton w={42} icon={<FlagIcon />} lines={["Follow", "Up"]} caret disabled />
    </Group>
    <Group w={116} label="Find" start={8} top={3}>
      <SmallColumn $w={101} $gap={4}>
        <PeopleSearch aria-label="Search People" placeholder="Search People" />
        <SmallButton icon={<AddressBookIcon />} label="Address Book" inset />
        <SmallButton icon={<FilterIcon />} label="Filter Email" caret inset />
      </SmallColumn>
    </Group>
    <Group w={57} label="Speech">
      <BigButton w={50} icon={<ReadAloudIcon />} lines={["Read", "Aloud"]} />
    </Group>
    <Group w={62} label="Add-ins">
      <BigButton w={50} icon={<AddInsIcon />} lines={["Get", "Add-ins"]} />
    </Group>
    <Group w={110} label="Adobe Send & Track">
      <BigButton w={60} icon={<AccountIcon />} lines={["My", "Account"]} caret />
    </Group>
    <Group w={79} label="Grammarly">
      <BigButton w={60} icon={<GrammarlyIcon />} lines={["Reply with", "Grammarly"]} />
    </Group>
    <CollapseRibbon aria-label="Collapse the ribbon"><Chevron up size={11} /></CollapseRibbon>
  </Ribbon>
);

const TrustCenter = () => (
  <Overlay>
    <Dialog role="dialog" aria-labelledby="trust-title">
      <DialogHeader>
        <DialogTitle id="trust-title">Trust Center</DialogTitle>
        <DialogControl>?</DialogControl>
        <DialogControl aria-label="Close dialog"><CloseIcon color="#333" /></DialogControl>
      </DialogHeader>
      <Categories>
        {categories.map((name) => (
          <li key={name}><Category $active={name === "Automatic Download"}>{name}</Category></li>
        ))}
      </Categories>
      <Panel>
        <Paragraph>You can control whether Outlook automatically downloads and displays pictures when you open an HTML email message.</Paragraph>
        <Paragraph>Blocking pictures in email messages can help protect your privacy. Pictures in HTML email can require Outlook to download the pictures from a server. Communicating to an external server in this way can verify to the sender that your email address is valid, possibly making you the target of more junk mailings.</Paragraph>
        <Options>
          {options.map((o) => (
            <Option key={o.id} htmlFor={o.id} $nested={o.nested} $last={o.last}>
              <Tick type="checkbox" id={o.id} defaultChecked={o.checked} data-focused={o.focused} />
              <OptionText $focused={o.focused}>{o.text}</OptionText>
            </Option>
          ))}
        </Options>
      </Panel>
      <DialogFooter>
        <DialogButton $primary>OK</DialogButton>
        <DialogButton>Cancel</DialogButton>
        <Grip />
      </DialogFooter>
    </Dialog>
  </Overlay>
);

export default function App() {
  return (
    <Window>
      <GlobalStyle />
      <TitleBar>
        <QuickAccess>
          <button aria-label="Send and receive all folders"><SendReceiveIcon /></button>
          <button aria-label="Undo"><UndoIcon /></button>
          <button aria-label="Customize toolbar"><QatMoreIcon /></button>
        </QuickAccess>
        <WindowTitle>
          Inbox <Redaction $w={157} /> <span>-</span> Outlook
        </WindowTitle>
        <Captions>
          <CaptionButton aria-label="Ribbon display options"><RibbonOptionsIcon /></CaptionButton>
          <CaptionButton aria-label="Minimize"><MinimizeIcon /></CaptionButton>
          <CaptionButton aria-label="Restore"><RestoreIcon /></CaptionButton>
          <CaptionButton aria-label="Close"><CloseIcon /></CaptionButton>
        </Captions>
      </TitleBar>
      <TabBar>
        <Tab $file>File</Tab>
        <Tab $active>Home</Tab>
        {["Send / Receive", "Folder", "View", "Help", "Grammarly", "Acrobat"].map((t) => <Tab key={t}>{t}</Tab>)}
        <TellMe><BulbIcon />Tell me what you want to do</TellMe>
      </TabBar>
      <RibbonGroups />
      <Main>
        <Sidebar>
          <CollapsePane aria-label="Minimize the folder pane">
            <Art w={6} h={9}><path d="M5 .5L1.500 4.500L5 8.500" stroke="#444" strokeWidth="1.800" /></Art>
          </CollapsePane>
          <AccountRow>
            <Art w={8} h={18}><path d="M6.500 6.500V13H0Z" fill="#333" /></Art>
            <AccountMark />
            <AccountName />
          </AccountRow>
          <ul>
            {folders.map((f) => (
              <FolderRow key={f.name} $selected={f.selected}>
                <Expander>
                  {f.open && <Art w={6} h={9}><path d="M.5 .8L4.800 4.500L.5 8.200Z" fill="#fff" stroke="#8a8a8a" /></Art>}
                </Expander>
                {f.icon}
                <FolderName>{f.name}</FolderName>
                {f.count && <Count $bold={f.bold}>{f.count}</Count>}
              </FolderRow>
            ))}
          </ul>
        </Sidebar>
        <VerticalRule $color="#c8c8c8" />
        <MessageList>
          <SearchRow>
            <MailSearch aria-label="Search Current Mailbox" placeholder="Search Current Mailbox" />
            <MagnifierIcon />
            <ScopeBox>
              <Scope aria-label="Search scope"><option>Current Mailbox</option></Scope>
              <Caret />
            </ScopeBox>
          </SearchRow>
          <ListTabs>
            <Pivot $active>Focused</Pivot>
            <Pivot>Other</Pivot>
            <SortButton $push>By Date <Chevron /></SortButton>
            <SortButton aria-label="Reverse sort order"><ArrowUpIcon /></SortButton>
          </ListTabs>
          <EmptyNote>We didn't find anything to show here.</EmptyNote>
        </MessageList>
        <VerticalRule $color="#d3d9cf" />
      </Main>
      <ModuleBar>
        {["Mail", "Calendar", "People", "Tasks"].map((m) => <Module key={m}>{m}</Module>)}
        <button aria-label="More modules">
          <Art w={20} h={6}><g fill="#1668b0"><circle cx="2" cy="3" r="2" /><circle cx="10" cy="3" r="2" /><circle cx="18" cy="3" r="2" /></g></Art>
        </button>
      </ModuleBar>
      <StatusBar>
        <StatusText>Items: 0</StatusText>
        <StatusRight>
          <StatusText>All folders are up to date.</StatusText>
          <StatusText>Connected to: Microsoft Exchange</StatusText>
          <ViewButtons>
            <ViewButton $active aria-label="Normal view"><NormalViewIcon /></ViewButton>
            <ViewButton aria-label="Reading view"><ReadingViewIcon /></ViewButton>
          </ViewButtons>
          <ZoomBox>
            <ZoomStep aria-label="Zoom out"><Art w={8}><path d="M0 4.500H8" stroke="#999" /></Art></ZoomStep>
            <ZoomRange type="range" aria-label="Zoom" min={0} max={200} defaultValue={100} />
            <ZoomStep aria-label="Zoom in"><Art w={8}><path d="M0 4.500H8M4.500 0V8" stroke="#999" /></Art></ZoomStep>
            <ZoomValue>100%</ZoomValue>
          </ZoomBox>
        </StatusRight>
      </StatusBar>
      <TrustCenter />
    </Window>
  );
}
